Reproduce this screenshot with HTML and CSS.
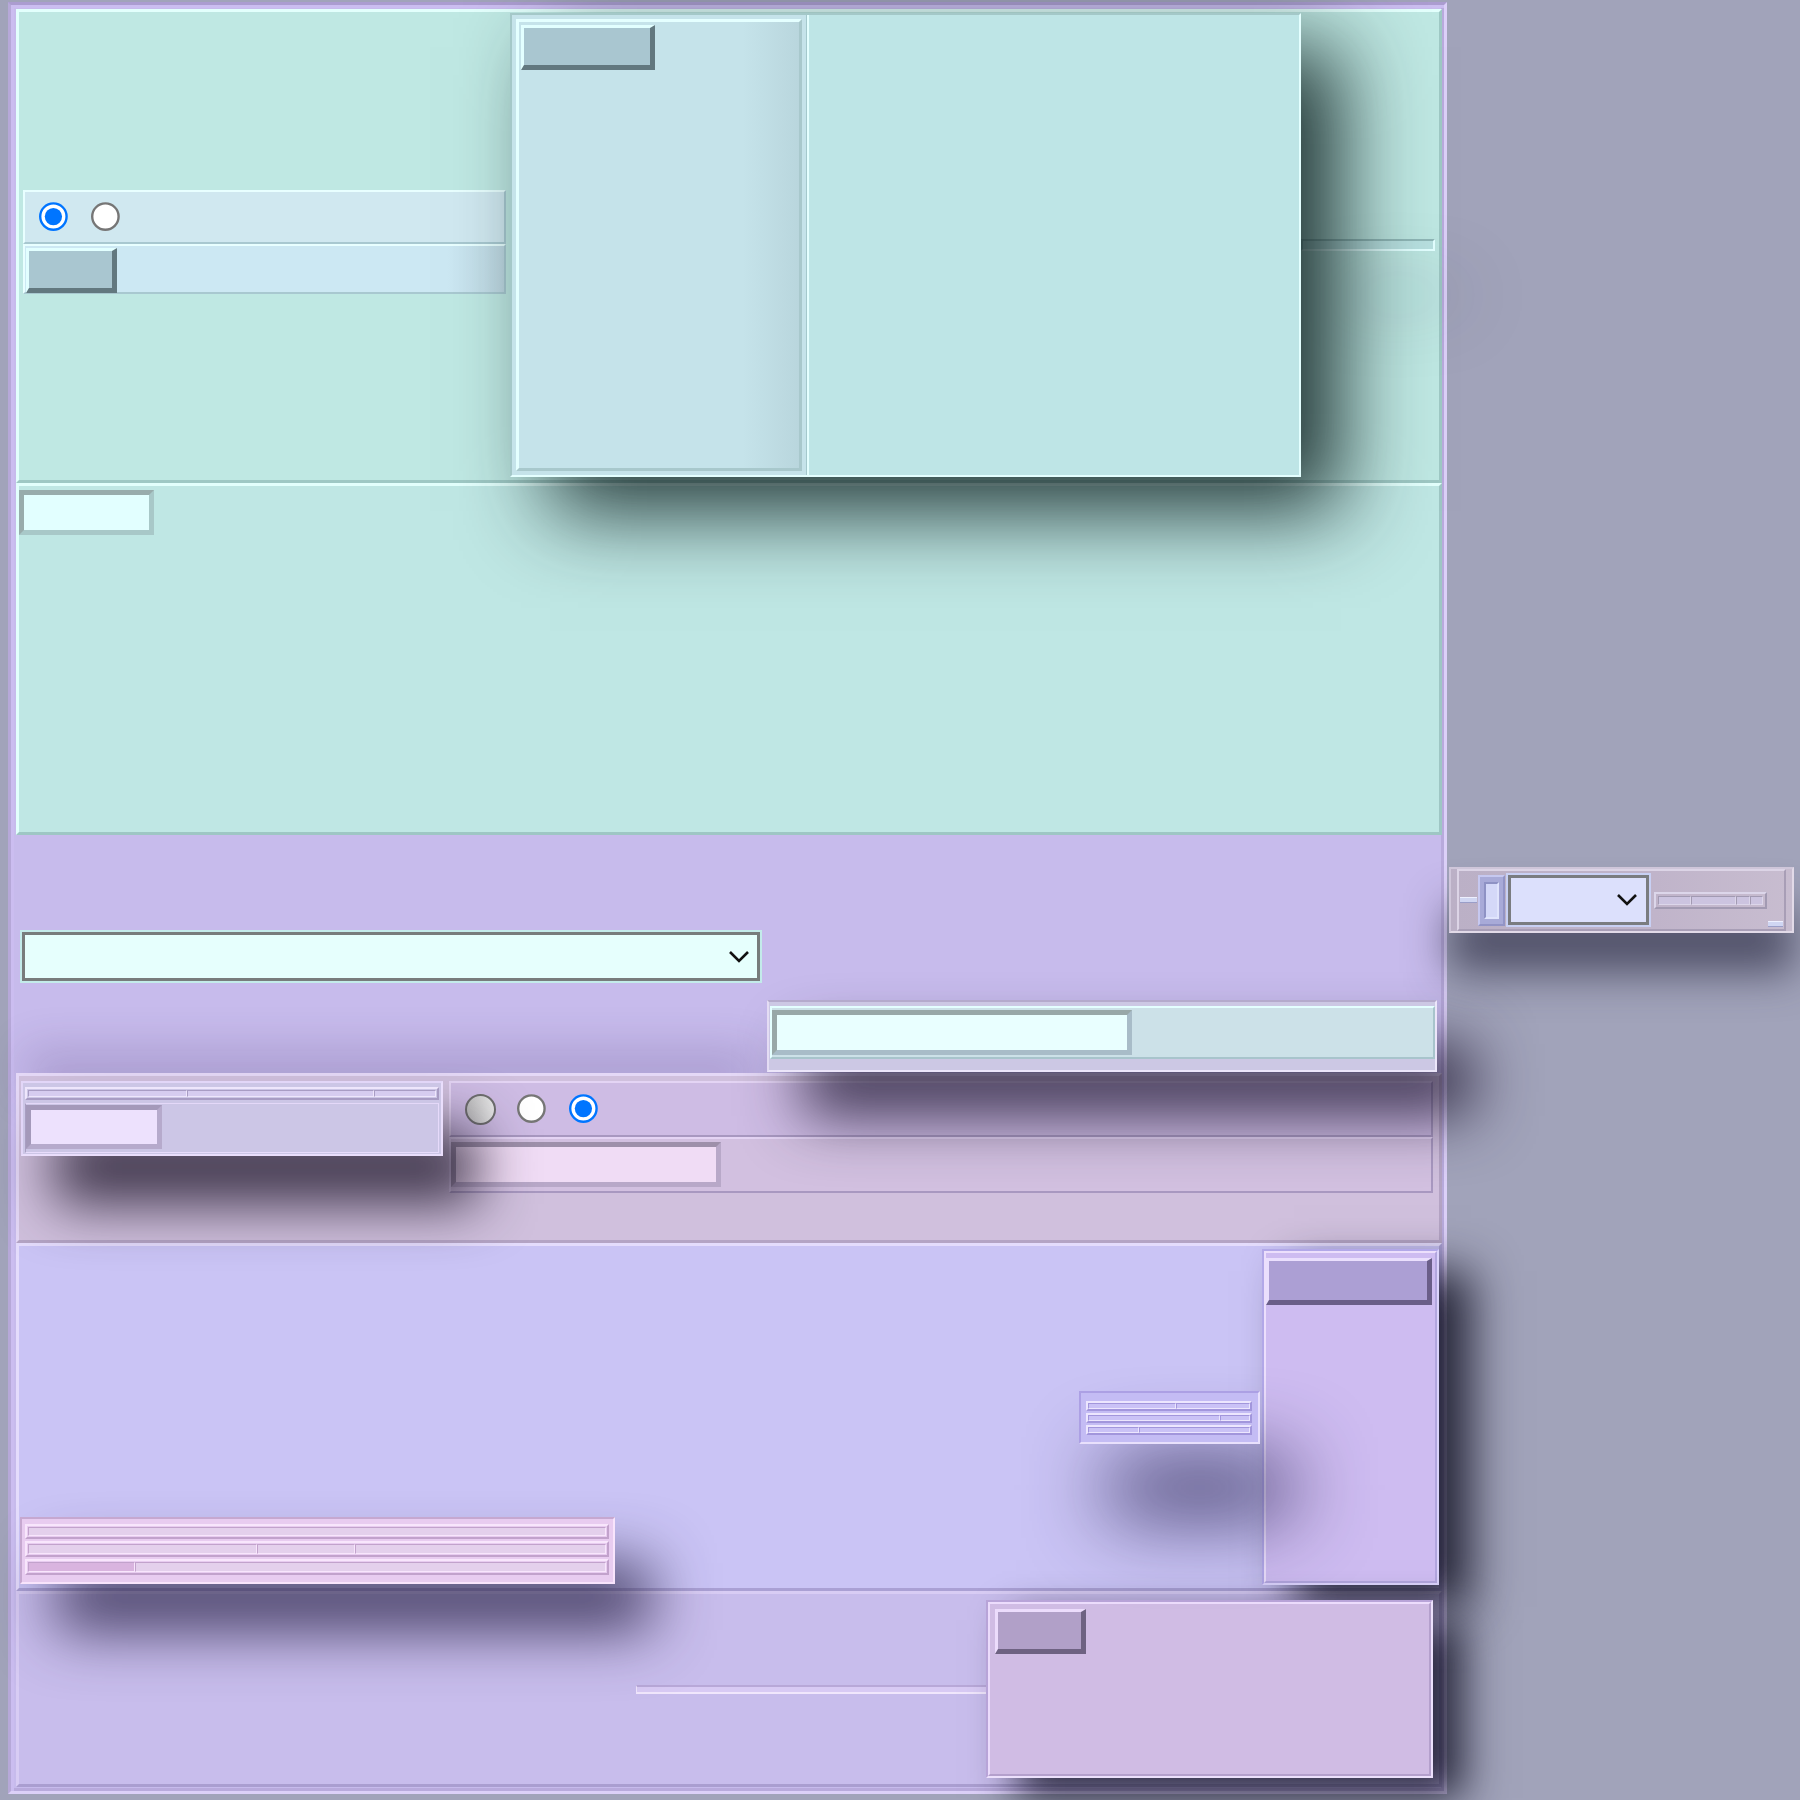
FILE: index.html
```html
<!DOCTYPE html>
<html>
<head>
<meta charset="utf-8">
<title>Panels</title>
<link rel="stylesheet" href="styles.css">
</head>
<body>
<div class="frame">
  <section class="sec sec1">
    <div class="s1-left">
      <div class="t-row t-radio">
        <input class="radio" type="radio" name="r1" checked>
        <input class="radio" type="radio" name="r1">
      </div>
      <div class="t-row t-btn">
        <button class="btn btn-teal b1" type="button"></button>
      </div>
    </div>
    <div class="bigpanel">
      <div class="bp-col-a">
        <div class="bp-inset"><button class="btn btn-teal b2" type="button"></button></div>
      </div>
      <div class="bp-col-b"></div>
    </div>
    <div class="s1-bar"></div>
  </section>

  <section class="sec sec2">
    <input class="field field-teal f1" type="text">
  </section>

  <div class="sec3">
    <div class="select sel-main">
      <div class="select-face">
        <svg class="chev" width="22" height="14" viewBox="0 0 22 14"><path d="M2 2 L11 11 L20 2" fill="none" stroke="#111" stroke-width="2.6"/></svg>
      </div>
    </div>
    <div class="panel3">
      <div class="p3-row"><input class="field field-teal f2" type="text"></div>
    </div>
  </div>

  <section class="sec sec4">
    <div class="s4-left">
      <div class="mrow lav s4-strip">
        <span class="seg" style="width:159px"></span>
        <span class="seg" style="width:187px"></span>
        <span class="seg grow"></span>
      </div>
      <div class="s4-inrow"><input class="field field-lav f3" type="text"></div>
    </div>
    <div class="s4-right">
      <div class="s4-row s4-radios">
        <span class="radio-gray"></span>
        <input class="radio" type="radio" name="r2">
        <input class="radio" type="radio" name="r2" checked>
      </div>
      <div class="s4-row s4-inputs"><input class="field field-pink f4" type="text"></div>
    </div>
  </section>

  <section class="sec sec5">
    <div class="meter pink-meter">
      <div class="mrow pink"><span class="seg grow"></span></div>
      <div class="mrow pink">
        <span class="seg" style="width:229px"></span>
        <span class="seg" style="width:98px"></span>
        <span class="seg grow"></span>
      </div>
      <div class="mrow pink">
        <span class="seg fill" style="width:107px"></span>
        <span class="seg grow"></span>
      </div>
    </div>
    <div class="meter small-meter">
      <div class="mrow peri">
        <span class="seg" style="width:88px"></span>
        <span class="seg grow"></span>
      </div>
      <div class="mrow peri">
        <span class="seg" style="width:132px"></span>
        <span class="seg grow"></span>
      </div>
      <div class="mrow peri">
        <span class="seg" style="width:51px"></span>
        <span class="seg grow"></span>
      </div>
    </div>
    <div class="tall">
      <div class="tall-inset"><button class="btn btn-violet b3" type="button"></button></div>
    </div>
  </section>

  <section class="sec sec6">
    <div class="s6-bar"></div>
    <div class="panel6">
      <div class="p6-inset"><button class="btn btn-mauve b4" type="button"></button></div>
    </div>
  </section>
</div>

<div class="float">
  <div class="float-in">
    <span class="f-dash"></span>
    <span class="f-thumb"><span class="f-thumb-in"></span></span>
    <div class="select sel-float">
      <div class="select-face">
        <svg class="chev" width="22" height="14" viewBox="0 0 22 14"><path d="M2 2 L11 11 L20 2" fill="none" stroke="#111" stroke-width="2.6"/></svg>
      </div>
    </div>
    <div class="mrow fbar">
      <span class="seg" style="width:33px"></span>
      <span class="seg" style="width:45px"></span>
      <span class="seg" style="width:14px"></span>
      <span class="seg grow"></span>
    </div>
    <span class="f-dash f-corner"></span>
  </div>
</div>
</body>
</html>
```

FILE: styles.css
```css
* { box-sizing: border-box; }
html, body { margin: 0; padding: 0; }
body {
  width: 1800px;
  height: 1800px;
  background: #a1a3ba;
  position: relative;
  overflow: hidden;
  font-family: "Liberation Sans", Arial, sans-serif;
}

/* ---------- outer frame ---------- */
.frame {
  margin: 2px 0 0 8px;
  width: 1439px;
  height: 1792px;
  border: 3px solid;
  border-color: #ab9cd0 #dcd0f8 #dcd0f8 #b6a8d8;
  box-shadow: inset 3px 3px 0 #cbbdf0, inset -3px -3px 0 #b8aadc;
  background: #c7bbec;
  padding: 4px 2px 3px 5px;
  display: flex;
  flex-direction: column;
}

.sec { flex: none; border: 3px solid; }

/* ---------- common controls ---------- */
.btn {
  appearance: none;
  margin: 0;
  padding: 0;
  display: block;
  border-style: solid;
  border-width: 3px 5px 5px 3px;
}
.btn-teal { background: #a9c6d0; border-color: #e2ffff #62787f #62787f #e2ffff; }
.btn-violet { background: #ac9fd4; border-color: #eadffd #6a5e88 #6a5e88 #eadffd; }
.btn-mauve { background: #b1a0c8; border-color: #ecdcfc #6e6282 #6e6282 #ecdcfc; }

.field {
  appearance: none;
  margin: 0;
  padding: 0;
  display: block;
  border: 5px solid;
  outline: none;
}
.field-teal { background: #e2ffff; border-color: #98acac #a8c8c8 #a8c8c8 #98acac; }
.field-lav { background: #ede1fd; border-color: #a499ba #b6aacc #b6aacc #a499ba; }
.field-pink { background: #f0dcf5; border-color: #9e90aa #b8a8c8 #b8a8c8 #9e90aa; }

.radio {
  width: 13px;
  height: 13px;
  zoom: 2.4;
  margin: 0;
  flex: none;
}
.radio-gray {
  width: 31px;
  height: 31px;
  border-radius: 50%;
  border: 2.6px solid #6e6e6e;
  background: linear-gradient(90deg, #c2c2c2, #e9e9e9);
  flex: none;
}

.select { border: 2px solid #c3ebea; }
.select-face {
  height: 100%;
  border: 3px solid #787c7c;
  background: #e6fffd;
  display: flex;
  align-items: center;
  justify-content: flex-end;
  padding-right: 7px;
}
.chev { display: block; }

/* meter rows */
.mrow {
  display: flex;
  border: 2px solid;
  border-color: var(--hl) var(--sh) var(--sh) var(--hl);
  padding: 1px;
}
.seg {
  display: block;
  flex: none;
  border: 1px solid;
  border-color: var(--sh) var(--hl) var(--hl) var(--sh);
  background: var(--seg);
}
.seg.grow { flex: 1; }
.seg.fill { background: var(--fill); }

.pink { --hl: #f8e6fc; --sh: #c2a2cc; --seg: #e4d0ec; --fill: #d9b4df; }
.peri { --hl: #ece6fe; --sh: #a296dc; --seg: #cac2f6; }
.lav { --hl: #eee6fc; --sh: #a89cc4; --seg: #d6ccf0; }

/* ---------- section 1 ---------- */
.sec1 {
  height: 474px;
  background: #bfe8e3;
  border-color: #e2fffc #9ec8c4 #9ec8c4 #e2fffc;
  display: flex;
  align-items: flex-start;
  padding-left: 4px;
}
.s1-left {
  width: 483px;
  margin-top: 178px;
  display: flex;
  flex-direction: column;
}
.t-row {
  border: 2px solid;
  border-color: #e8ffff #a8c8d0 #a8c8d0 #e8ffff;
}
.t-radio {
  height: 54px;
  background: #d0e8f0;
  display: flex;
  align-items: center;
  gap: 21px;
  padding-left: 14px;
}
.t-btn {
  height: 50px;
  background: linear-gradient(90deg, #cce8f3 0, #cce8f3 88%, #bed8e2 100%);
  padding-top: 2px;
  padding-left: 1px;
}
.b1 { width: 91px; height: 45px; }

.bigpanel {
  position: relative;
  z-index: 2;
  width: 791px;
  height: 464px;
  margin-left: 4px;
  margin-top: 1px;
  border: 2px solid;
  border-color: #a4c8c8 #e4ffff #e4ffff #a4c8c8;
  display: flex;
  box-shadow: 40px 34px 80px rgba(22, 40, 40, 0.92);
}
.bp-col-a {
  width: 295px;
  background: #c5e3ea;
  border-right: 1px solid #a4c8cc;
  padding: 4px;
}
.bp-inset {
  height: 100%;
  border: 3px solid;
  border-color: #e4ffff #a8c8cc #a8c8cc #e4ffff;
  padding: 3px 0 0 2px;
  background: linear-gradient(90deg, #c5e3ea 0, #c5e3ea 80%, #b9d6dd 100%);
}
.b2 { width: 134px; height: 45px; }
.bp-col-b {
  flex: 1;
  background: #bee5e6;
  border-left: 2px solid #e4ffff;
}
.s1-bar {
  position: relative;
  z-index: 1;
  width: 134px;
  height: 12px;
  margin-top: 227px;
  border: 2px solid;
  border-color: #8fb6b6 #e2ffff #e2ffff #8fb6b6;
  background: #b8e0e0;
  box-shadow: 30px 50px 70px rgba(40, 50, 70, 0.35);
}

/* ---------- section 2 ---------- */
.sec2 {
  height: 352px;
  background: #bfe7e4;
  border-color: #e2fffc #9ec6c4 #9ec6c4 #e2fffc;
}
.f1 { width: 135px; height: 45px; margin: 4px 0 0 0; }

/* ---------- section 3 (frame bg) ---------- */
.sec3 {
  flex: none;
  height: 238px;
  display: flex;
  align-items: flex-start;
}
.sel-main {
  width: 742px;
  height: 53px;
  margin: 95px 0 0 4px;
  box-shadow: 0 115px 45px -5px rgba(50, 30, 90, 0.2);
}
.panel3 {
  position: relative;
  z-index: 1;
  width: 670px;
  height: 72px;
  margin: 165px 0 0 5px;
  background: #ccc8e4;
  border: 2px solid;
  border-color: #b4aacc #ece6fa #ece6fa #e4dcf4;
  padding: 4px 0 0 1px;
  box-shadow: 36px 44px 60px rgba(38, 30, 56, 0.85);
}
.p3-row {
  width: 665px;
  height: 53px;
  background: #cce1e8;
  border: 2px solid;
  border-color: #e4ffff #a8c4cc #a8c4cc #e4ffff;
  padding: 2px 0 0 0;
}
.f2 { width: 360px; height: 45px; background: #e9ffff; border-color: #98a8a8 #a8bcc8 #a8bcc8 #98a8a8; }

/* ---------- section 4 ---------- */
.sec4 {
  height: 170px;
  background: #d0c0dd;
  border-color: #e4d8f6 #b4a4c4 #b4a4c4 #e4d8f6;
  display: flex;
  align-items: flex-start;
  padding: 5px 0 0 2px;
}
.s4-left {
  position: relative;
  z-index: 1;
  width: 422px;
  height: 75px;
  background: #ccc6e6;
  border: 2px solid;
  border-color: #e2d6f8 #eadefc #eadefc #e2d6f8;
  padding: 2px 2px 0 2px;
  box-shadow: 34px 48px 55px rgba(36, 28, 48, 0.85);
}
.s4-strip { height: 13px; margin-top: 2px; }
.s4-inrow {
  height: 50px;
  margin-top: 3px;
  border: 1px solid;
  border-color: #e4d8f8 #e6dafa #e8dcfc #a89ec2;
  padding: 1px 0 0 0;
}
.f3 { width: 136px; height: 44px; }
.s4-right {
  width: 984px;
  height: 112px;
  margin-left: 6px;
  display: flex;
  flex-direction: column;
}
.s4-row {
  border: 2px solid;
  border-color: #e4d4f4 #a898c0 #a898c0 #e4d4f4;
}
.s4-radios {
  height: 56px;
  background: #cebce4;
  display: flex;
  align-items: center;
  gap: 21px;
  padding-left: 14px;
}
.s4-inputs {
  height: 56px;
  background: #d2c0e0;
  padding-top: 3px;
}
.f4 { width: 270px; height: 45px; }

/* ---------- section 5 ---------- */
.sec5 {
  height: 348px;
  background: #cac4f5;
  border-color: #e4dcfc #aaa0d4 #aaa0d4 #e4dcfc;
  display: flex;
  align-items: flex-start;
}
.meter {
  display: flex;
  flex-direction: column;
  border: 2px solid;
}
.pink-meter {
  position: relative;
  z-index: 1;
  align-self: flex-end;
  width: 595px;
  height: 67px;
  margin: 0 0 4px 1px;
  background: #e8ccf0;
  border-color: #c6a8d0 #f8e4fc #f8e4fc #c6a8d0;
  padding: 5px 4px 0 3px;
  gap: 2px;
  box-shadow: 36px 46px 60px rgba(40, 34, 70, 0.82);
}
.pink-meter .mrow { height: 16px; }
.pink-meter .mrow:first-child { height: 15px; }
.small-meter {
  position: relative;
  z-index: 2;
  align-self: center;
  margin-left: auto;
  margin-right: 2px;
  width: 181px;
  height: 53px;
  background: #c4bcf4;
  border-color: #aca0e4 #e8e0fc #e8e0fc #aca0e4;
  padding: 8px 6px 0 5px;
  gap: 2px;
  box-shadow: 30px 70px 80px rgba(40, 36, 80, 0.92);
}
.small-meter .mrow { height: 10px; padding: 0; }
.tall {
  position: relative;
  z-index: 1;
  width: 177px;
  height: 336px;
  margin-top: 3px;
  background: #cebcf1;
  border: 2px solid;
  border-color: #b2a8e8 #dcd4fc #dcd4fc #b2a8e8;
  box-shadow: 32px 22px 44px rgba(22, 22, 40, 0.9);
}
.tall-inset {
  height: 100%;
  border: 2px solid;
  border-color: #ecdffc #b2a6de #b2a6de #ecdffc;
  padding-top: 5px;
}
.b3 { width: 166px; height: 47px; }

/* ---------- section 6 ---------- */
.sec6 {
  height: 196px;
  background: #c8bdec;
  border-color: #d8ccf4 #aa9ed0 #aa9ed0 #d8ccf4;
  display: flex;
  align-items: center;
  justify-content: flex-end;
  padding-right: 6px;
}
.s6-bar {
  width: 350px;
  height: 9px;
  background: #d8caf4;
  border-top: 2px solid #b8a8d8;
  border-bottom: 2px solid #f0e6fc;
  border-left: 1px solid #eee4fc;
}
.panel6 {
  position: relative;
  z-index: 1;
  width: 447px;
  height: 178px;
  background: #d0bce4;
  border: 2px solid;
  border-color: #b8a4d8 #ece0fc #ece0fc #b8a4d8;
  box-shadow: 30px 20px 40px rgba(20, 20, 40, 0.88);
}
.p6-inset {
  height: 100%;
  border: 2px solid;
  border-color: #ecdcfc #b4a0cc #b4a0cc #ecdcfc;
  padding: 5px 0 0 5px;
}
.b4 { width: 91px; height: 45px; }

/* ---------- floating toolbar ---------- */
.float {
  position: absolute;
  left: 1449px;
  top: 867px;
  width: 345px;
  height: 66px;
  border: 2px solid;
  border-color: #cfc6da #e2dae8 #e2dae8 #cfc6da;
  background: linear-gradient(90deg, #bbb0c6 0, #c0b4ca 60%, #c8bdd0 100%);
  padding: 0 6px;
  box-shadow: 0 40px 42px rgba(44, 44, 68, 0.68);
}
.float-in {
  height: 100%;
  border: 2px solid;
  border-color: #dcd4e6 #a89eb6 #a89eb6 #dcd4e6;
  display: flex;
  align-items: center;
}
.f-dash {
  display: block;
  flex: none;
  width: 17px;
  height: 6px;
  margin-left: 1px;
  background: #d0d6f2;
  border-top: 1px solid #eef0ff;
  border-bottom: 1px solid #9a9ec8;
}
.f-corner { width: 15px; align-self: flex-end; margin: 0 0 2px 1px; }
.f-thumb {
  display: block;
  flex: none;
  width: 27px;
  height: 51px;
  margin-left: 1px;
  background: #a8aad8;
  border: 2px solid;
  border-color: #c6c8f0 #9294c6 #9294c6 #c6c8f0;
  padding: 5px 0 0 4px;
}
.f-thumb-in {
  display: block;
  width: 15px;
  height: 37px;
  background: #d4d8f8;
  border: 2px solid;
  border-color: #8e92c4 #e0e4fc #e0e4fc #8e92c4;
}
.sel-float {
  flex: none;
  width: 145px;
  height: 54px;
  margin-left: 1px;
  border-color: #c8d0f4;
}
.sel-float .select-face { background: #dce0fc; border-color: #7a7c80; padding-right: 8px; }
.fbar {
  --hl: #dcd6ea; --sh: #a29ab2; --seg: #ccc4e0;
  flex: none;
  width: 113px;
  height: 17px;
  margin-left: 3px;
  padding: 2px;
}
```
